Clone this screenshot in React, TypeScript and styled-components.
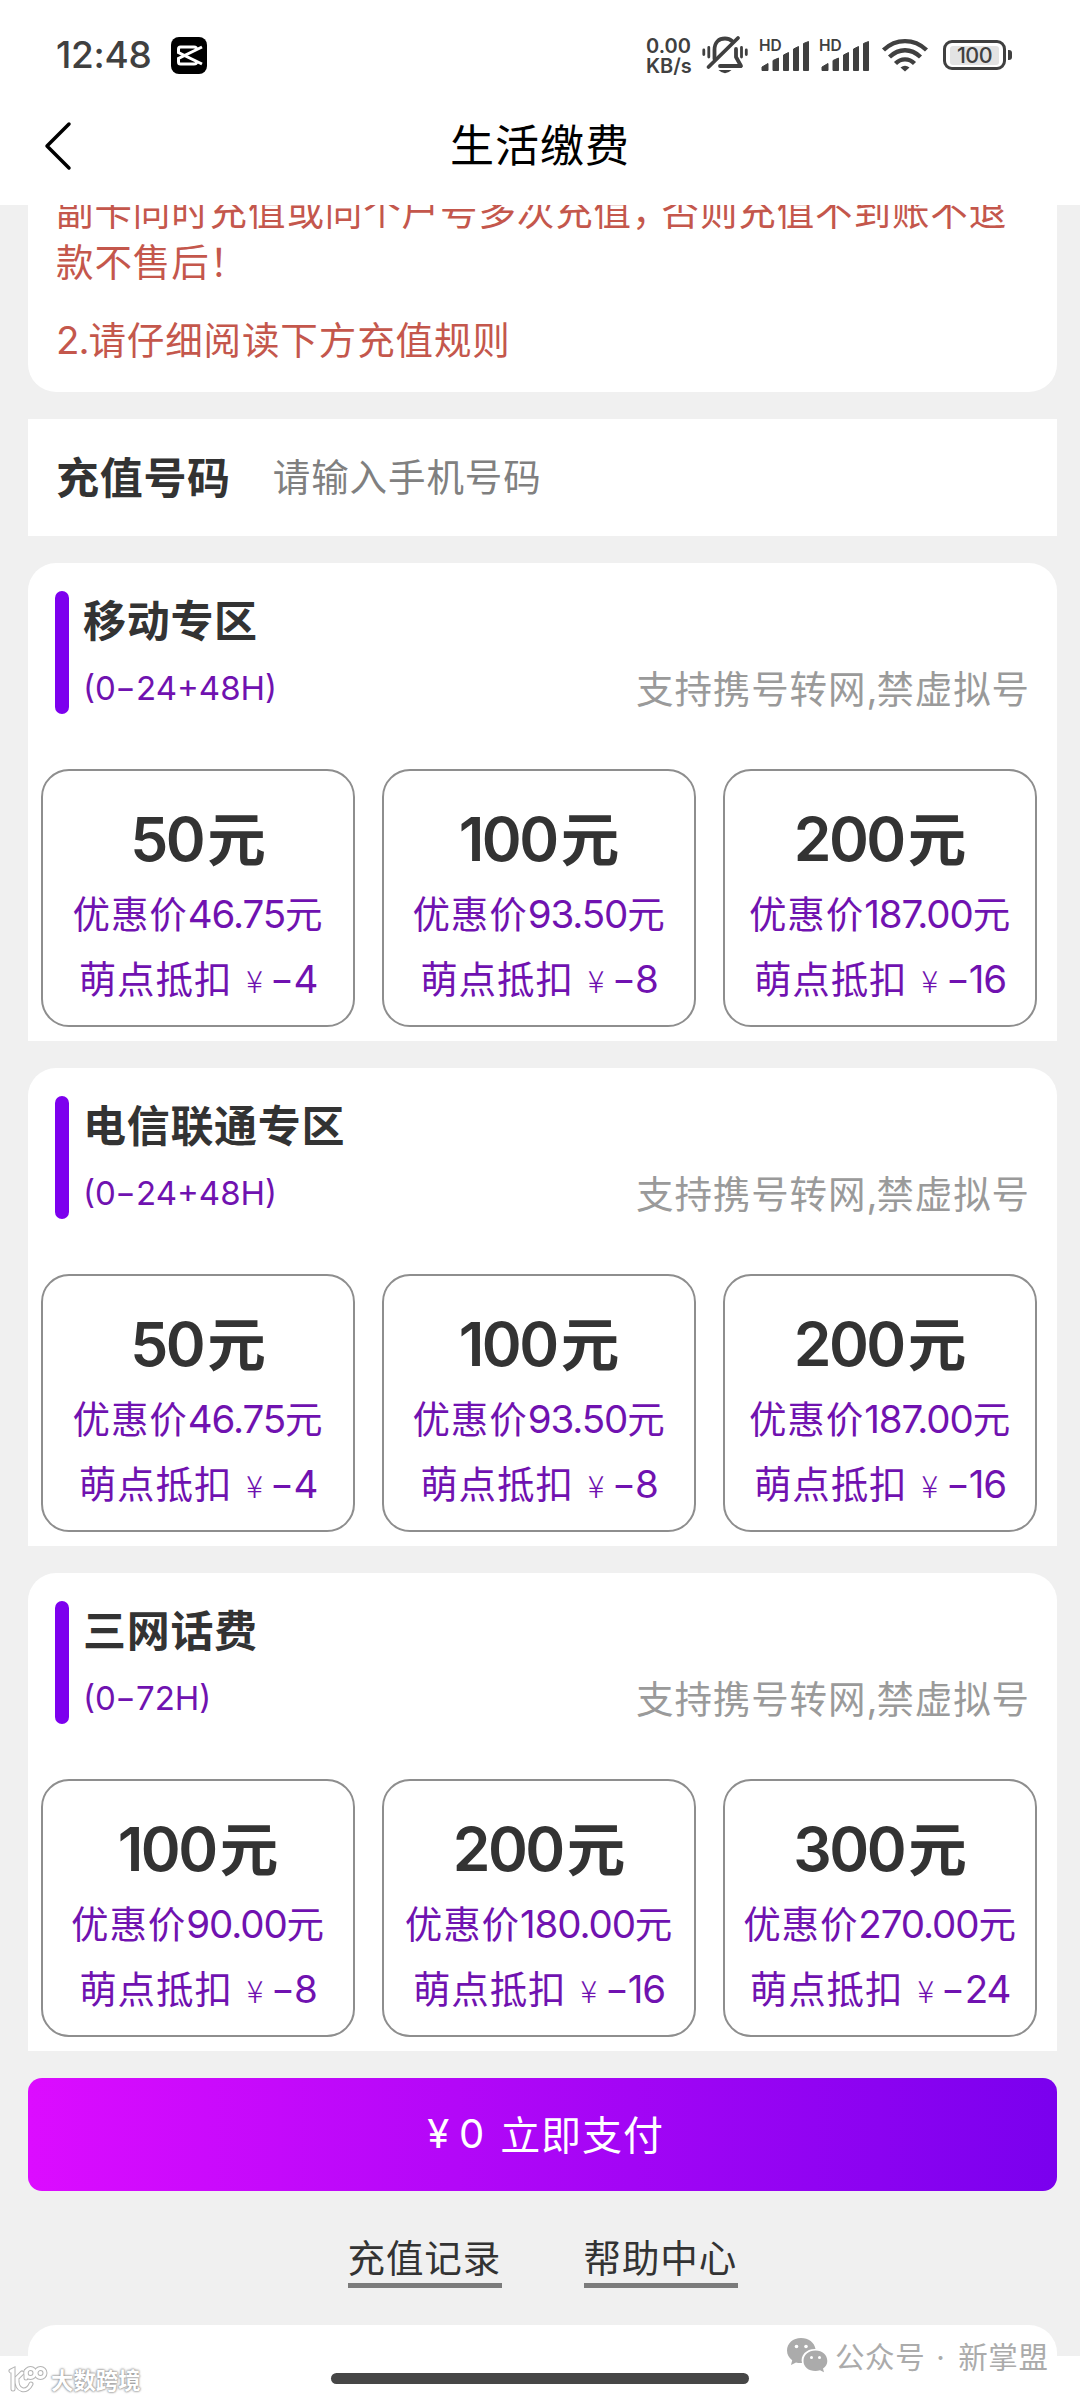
import React from "react";
import styled, { createGlobalStyle } from "styled-components";

const latin = `"Inter", "Noto Sans CJK SC", sans-serif`;

const Global = createGlobalStyle`
  html, body { margin: 0; padding: 0; background: #fff; }
  * { box-sizing: border-box; }
  body { font-family: ${latin}; }
  button, input { font: inherit; border: 0; padding: 0; background: none; }
`;

const Screen = styled.div`
  position: relative;
  width: 1080px;
  height: 2400px;
  overflow: hidden;
  display: flex;
  flex-direction: column;
  background: #fff;
`;

const StatusBar = styled.header`
  height: 110px;
  flex: none;
  display: flex;
  align-items: center;
  justify-content: space-between;
  padding: 0 74px 0 56px;
  color: #404040;
`;

const StatusGroup = styled.div`
  display: flex;
  align-items: center;
`;

const Clock = styled.span`
  width: 115px;
  font-size: 37px;
  line-height: 44px;
  font-weight: 500;
  letter-spacing: -0.3px;
  white-space: nowrap;
`;

const NetSpeed = styled.div`
  display: flex;
  flex-direction: column;
  width: 56px;
  font-size: 20px;
  line-height: 20px;
  font-weight: 600;
  padding-top: 2px;
`;

const StatusSvg = styled.svg<{ $before?: number }>`
  display: block;
  flex: none;
  overflow: visible;
  margin-left: ${(p) => p.$before ?? 0}px;
`;

const TitleBar = styled.nav`
  height: 95px;
  flex: none;
  display: grid;
  grid-template-columns: 120px 1fr 120px;
  align-items: center;
  padding-bottom: 23px;
  color: #000;
`;

const BackButton = styled.button`
  display: flex;
  padding-left: 43px;
`;

const Title = styled.h1`
  margin: 0;
  text-align: center;
  font-size: 44px;
  line-height: 60px;
  font-weight: 400;
  letter-spacing: 1px;
`;

const Content = styled.main`
  height: 2151px;
  flex: none;
  overflow: hidden;
  display: flex;
  flex-direction: column;
  gap: 27px;
  padding: 0 23px 0 28px;
  background: #f0f0f0;
`;

const Notice = styled.section`
  height: 187px;
  flex: none;
  display: flex;
  flex-direction: column;
  justify-content: flex-end;
  gap: 27px;
  overflow: hidden;
  padding: 0 28px 26px;
  border-radius: 0 0 28px 28px;
  background: #fff;
  color: #c4574c;
`;

const NoticeText = styled.p`
  margin: 0;
  font-size: 37.5px;
  line-height: 51px;
  letter-spacing: 0.9px;
`;

const Comma = styled.span`
  letter-spacing: -8px;
`;

const PhoneRow = styled.label`
  height: 117px;
  flex: none;
  display: flex;
  align-items: center;
  gap: 42px;
  padding: 0 28px;
  background: #fff;
`;

const PhoneLabel = styled.span`
  margin-bottom: 5px;
  font-size: 43px;
  font-weight: 700;
  letter-spacing: 0.7px;
  color: #333;
  white-space: nowrap;
`;

const PhoneInput = styled.input`
  flex: 1;
  min-width: 0;
  font-size: 37.5px;
  letter-spacing: 0.9px;
  outline: none;
  &::placeholder { color: #808080; opacity: 1; }
`;

const Zone = styled.section`
  height: 478px;
  flex: none;
  display: flex;
  flex-direction: column;
  justify-content: space-between;
  padding: 28px 20px 14px 13px;
  border-radius: 28px 28px 0 0;
  background: #fff;
`;

const ZoneHead = styled.div`
  height: 123px;
  display: flex;
  padding: 0 7px 0 14px;
`;

const ZoneMark = styled.i`
  width: 14px;
  border-radius: 7px;
  background: #7d00ee;
`;

const ZoneNames = styled.div`
  flex: 1;
  display: flex;
  flex-direction: column;
  padding-left: 14px;
`;

const ZoneTitle = styled.h2`
  margin: 0;
  font-size: 43px;
  line-height: 61px;
  font-weight: 700;
  letter-spacing: 0.7px;
  color: #333;
`;

const ZoneTime = styled.span`
  margin-top: 12px;
  font-size: 33px;
  line-height: 48px;
  color: #7012b0;
`;

const ZoneHint = styled.span`
  align-self: flex-end;
  margin-bottom: -4px;
  font-size: 37.5px;
  line-height: 56px;
  letter-spacing: 0.9px;
  color: #9a9a9a;
  white-space: nowrap;
`;

const PlanGrid = styled.div`
  display: grid;
  grid-template-columns: repeat(3, 314px);
  justify-content: space-between;
`;

const Plan = styled.button`
  height: 258px;
  display: flex;
  flex-direction: column;
  align-items: center;
  padding-top: 30px;
  border: 2px solid #8e8e8e;
  border-radius: 28px;
  background: #fff;
  white-space: nowrap;
`;

const Amount = styled.strong`
  display: flex;
  align-items: baseline;
  gap: 4px;
  height: 76px;
  font-size: 58.5px;
  line-height: 76px;
  font-weight: 700;
  color: #333;
`;

const AmountDigits = styled.span`
  font-size: 60.5px;
  font-weight: 600;
  letter-spacing: -2.5px;
`;

const PlanLine = styled.span`
  height: 56px;
  margin-top: 9px;
  font-size: 37.5px;
  line-height: 56px;
  letter-spacing: 0.9px;
  color: #7012b0;
`;

const Num = styled.span<{ $size: number; $tight: number }>`
  font-size: ${(p) => p.$size}px;
  letter-spacing: ${(p) => -p.$tight}px;
`;

const Dash = styled.span`
  display: inline-block;
  margin: 0 2.5px;
  transform: scaleX(1.35);
`;

const SmallYen = styled.span`
  display: inline-block;
  margin: 0 7px 0 14px;
  font-family: "Noto Sans CJK SC", sans-serif;
  font-size: 31px;
  font-weight: 300;
  line-height: 40px;
`;

const PayButton = styled.button`
  height: 113px;
  flex: none;
  display: flex;
  align-items: center;
  justify-content: center;
  padding: 0 0 3px 6px;
  border-radius: 14px;
  background: linear-gradient(90deg, #dc0cff, #7a00ee);
  color: #fff;
  font-size: 40px;
  letter-spacing: 0.9px;
`;

const PayAmount = styled.span`
  display: flex;
  gap: 9px;
  margin-right: 15px;
`;

const Links = styled.div`
  height: 80px;
  flex: none;
  display: flex;
  justify-content: center;
  gap: 82px;
  padding-top: 15px;
`;

const TextLink = styled.a`
  width: 154px;
  height: 55px;
  border-bottom: 5px solid #7b7b7b;
  font-size: 37.5px;
  line-height: 52px;
  letter-spacing: 0.9px;
  white-space: nowrap;
  color: #333;
`;

const RulesCard = styled.section`
  height: 80px;
  flex: none;
  border-radius: 28px 28px 0 0;
  background: #fff;
`;

const HomeBar = styled.div`
  position: absolute;
  left: 331px;
  top: 2373px;
  width: 418px;
  height: 11px;
  border-radius: 6px;
  background: #464646;
`;

const AccountMark = styled.div`
  position: absolute;
  left: 786px;
  top: 2333px;
  display: flex;
  align-items: center;
  gap: 7px;
  height: 44px;
  font-size: 29.5px;
  letter-spacing: 0.6px;
  color: #ababab;
  white-space: nowrap;
`;

const MarkDot = styled.span`
  margin: 0 4px 0 2px;
`;

const CornerMark = styled.div`
  position: absolute;
  left: 8px;
  top: 2362px;
  display: flex;
  align-items: center;
  gap: 3px;
  height: 34px;
  font-size: 22.4px;
  font-weight: 700;
  color: #fff;
  text-shadow: 0 0 2px #999, 0 0 2px #999, 0 0 3px #aaa;
`;

function numbers(text: string, size = 38.5, tight = 1.1) {
  return text
    .split(/([0-9.,+()H]+|-)/)
    .filter(Boolean)
    .map((part, i) => {
      if (part === "-") {
        return <Num key={i} $size={size} $tight={0}><Dash>-</Dash></Num>;
      }
      return /^[0-9.,+()H]/.test(part) ? (
        <Num key={i} $size={size} $tight={tight}>{part}</Num>
      ) : (
        <React.Fragment key={i}>{part}</React.Fragment>
      );
    });
}

const CapCutIcon = () => (
  <StatusSvg width="36" height="37" viewBox="0 0 36 37">
    <rect width="36" height="37" rx="8" fill="#000" />
    <path d="M31 10 L7.500 21.500 V25 Q7.500 27 9.500 27 H23 Q25.500 27 25.500 25 V24 M31 27 L7.500 15.500 V12 Q7.500 10 9.500 10 H23 Q25.500 10 25.500 12 V13" fill="none" stroke="#fff" strokeWidth="3" />
  </StatusSvg>
);

const MutedBell = () => (
  <StatusSvg width="46" height="38" viewBox="0 0 46 38" fill="none" stroke="#404040" strokeWidth="3.8" strokeLinecap="round">
    <path d="M12.5 23 V14 C12.5 6 17 2.500 23 2.500 C26 2.500 28 3.200 30 5" />
    <path d="M34 13 V21 L39 30 H18" strokeLinejoin="round" />
    <path d="M36 2 L6.500 31" />
    <path d="M16.500 34 H29.500 Q23 40.500 16.500 34 Z" fill="#404040" stroke="none" />
    <path d="M1.800 14 V18.500 M6.800 11.500 V21 M39.500 11.500 V21 M44.300 14 V18.500" strokeWidth="2.800" />
  </StatusSvg>
);

const HdText = styled.text`
  font-family: "Inter", sans-serif;
  font-size: 15.5px;
  font-weight: 600;
`;

const HdSignal = ({ before }: { before: number }) => (
  <StatusSvg $before={before} width="50" height="32" viewBox="0 0 50 32" fill="#404040" stroke="#404040" strokeWidth="1" strokeLinejoin="round">
    <HdText x="0" y="12" stroke="none">HD</HdText>
    <path d="M3 31.500 V28 L9 24.500 V31.500 Z M14 31.500 V21.500 L19.500 19 V31.500 Z M24.500 31.500 V16 L29.500 13.500 V31.500 Z M34.500 31.500 V10 L39.500 7.500 V31.500 Z M44.500 31.500 V4.500 L49.500 2.500 V31.500 Z" />
  </StatusSvg>
);

const WifiIcon = () => (
  <StatusSvg $before={13} width="46" height="33" viewBox="0 0 46 33" fill="none" stroke="#404040" strokeWidth="4.4">
    <path d="M1.500 11 C14 -0.800 32 -0.800 44.500 11" />
    <path d="M7.500 18 C17 9 29 9 38.500 18" />
    <path d="M13.500 24.500 C19 19 27 19 32.500 24.500" />
    <path d="M23 32.500 L18.500 28.500 Q23 25 27.500 28.500 Z" fill="#404040" stroke="none" />
  </StatusSvg>
);

const Battery = styled.div`
  position: relative;
  width: 63px;
  height: 30px;
  margin-left: 15px;
  display: flex;
  align-items: center;
  justify-content: center;
  border: 3px solid #404040;
  border-radius: 9px;
  font-size: 21.5px;
  line-height: 22px;
  font-weight: 500;
  letter-spacing: -0.5px;
  &::after {
    content: "";
    position: absolute;
    right: -9px;
    top: 7px;
    width: 4px;
    height: 10px;
    border-radius: 0 3px 3px 0;
    background: #404040;
  }
`;

const BatteryFill = styled.span`
  width: 49px;
  height: 19px;
  display: flex;
  align-items: center;
  justify-content: center;
  border-radius: 3px;
  background: #e3e3e3;
`;

const WeChatIcon = () => (
  <svg width="42" height="36" viewBox="0 0 42 36">
    <path fill="#ababab" d="M15 1 C7 1 1 6.400 1 13.500 C1 17.500 3 21 6.200 23.300 L5 28 L10 25.400 C12 26 14 26.200 16 26 C14 18 21 11.500 29.500 12 C28.500 5.500 22.500 1 15 1 Z" />
    <path fill="#ababab" d="M29.500 13.500 C22.500 13.500 17.500 18 17.500 24 C17.500 30 22.500 34 29.500 34 C31 34 32.500 33.800 34 33.300 L38 35.300 L37 31.600 C39.800 29.800 41.300 27 41.300 24 C41.300 18 36.500 13.500 29.500 13.500 Z" />
    <g fill="#fff"><circle cx="10.500" cy="9.500" r="1.800" /><circle cx="20" cy="9.500" r="1.800" /><circle cx="25.500" cy="20.500" r="1.500" /><circle cx="33.500" cy="20.500" r="1.500" /></g>
  </svg>
);

const LogoIcon = () => (
  <svg width="40" height="30" viewBox="0 0 40 30" fill="none" strokeLinecap="round">
    {["#b4b4b4", "#fff"].map((c, i) => (
      <g key={c} stroke={c} strokeWidth={i ? 3 : 5}>
        <path d="M3 7 L5 6 V25 M14 9 L9 14 C8 28 19 29 23 20" />
        <path d="M18 14 V7" />
        <circle cx="22.500" cy="9" r="4.500" />
        <circle cx="32.500" cy="9" r="4.500" />
      </g>
    ))}
  </svg>
);

const zones = [
  { title: "移动专区", time: "(0-24+48H)", plans: [["50", "46.75", "4"], ["100", "93.50", "8"], ["200", "187.00", "16"]] },
  { title: "电信联通专区", time: "(0-24+48H)", plans: [["50", "46.75", "4"], ["100", "93.50", "8"], ["200", "187.00", "16"]] },
  { title: "三网话费", time: "(0-72H)", plans: [["100", "90.00", "8"], ["200", "180.00", "16"], ["300", "270.00", "24"]] },
];

export default function App() {
  return (
    <Screen>
      <Global />
      <StatusBar>
        <StatusGroup>
          <Clock>12:48</Clock>
          <CapCutIcon />
        </StatusGroup>
        <StatusGroup>
          <NetSpeed><span>0.00</span><span>KB/s</span></NetSpeed>
          <MutedBell />
          <HdSignal before={11} />
          <HdSignal before={10} />
          <WifiIcon />
          <Battery><BatteryFill>100</BatteryFill></Battery>
        </StatusGroup>
      </StatusBar>
      <TitleBar>
        <BackButton aria-label="返回">
          <svg width="30" height="50" viewBox="0 0 30 50" fill="none" stroke="#000" strokeWidth="3.500" strokeLinecap="round" strokeLinejoin="round">
            <path d="M26 3 L4 25 L26 47" />
          </svg>
        </BackButton>
        <Title>生活缴费</Title>
      </TitleBar>
      <Content>
        <Notice>
          <NoticeText>副卡同时充值或同个户号多次充值<Comma>，</Comma>否则充值不到账不退款不售后！</NoticeText>
          <NoticeText>{numbers("2.请仔细阅读下方充值规则")}</NoticeText>
        </Notice>
        <PhoneRow>
          <PhoneLabel>充值号码</PhoneLabel>
          <PhoneInput placeholder="请输入手机号码" />
        </PhoneRow>
        {zones.map((z) => (
          <Zone key={z.title}>
            <ZoneHead>
              <ZoneMark />
              <ZoneNames>
                <ZoneTitle>{z.title}</ZoneTitle>
                <ZoneTime>{numbers(z.time, 33, 0)}</ZoneTime>
              </ZoneNames>
              <ZoneHint>{numbers("支持携号转网,禁虚拟号")}</ZoneHint>
            </ZoneHead>
            <PlanGrid>
              {z.plans.map(([amount, price, points]) => (
                <Plan key={amount}>
                  <Amount><AmountDigits>{amount}</AmountDigits>元</Amount>
                  <PlanLine>{numbers(`优惠价${price}元`)}</PlanLine>
                  <PlanLine>
                    萌点抵扣<SmallYen>¥</SmallYen>{numbers("-" + points)}
                  </PlanLine>
                </Plan>
              ))}
            </PlanGrid>
          </Zone>
        ))}
        <PayButton><PayAmount><span>¥</span><span>0</span></PayAmount><span>立即支付</span></PayButton>
        <Links>
          <TextLink>充值记录</TextLink>
          <TextLink>帮助中心</TextLink>
        </Links>
        <RulesCard />
      </Content>
      <HomeBar />
      <AccountMark><WeChatIcon /><span>公众号<MarkDot> · </MarkDot>新掌盟</span></AccountMark>
      <CornerMark><LogoIcon /><span>大数跨境</span></CornerMark>
    </Screen>
  );
}
